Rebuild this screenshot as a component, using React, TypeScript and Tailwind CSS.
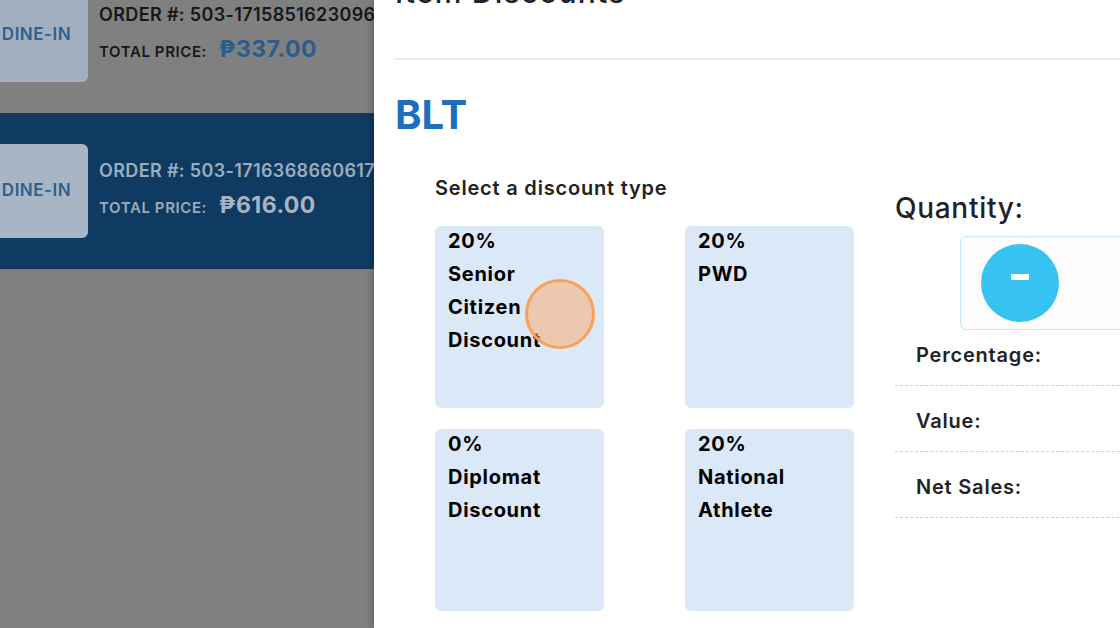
import React from "react";

const font = { fontFamily: "Inter, 'Noto Sans', sans-serif" };

function OrderRow({ order, price, active }: { order: string; price: string; active?: boolean }) {
  return (
    <div className={`h-[156px] flex items-center shrink-0 ${active ? "bg-[#0f3a62]" : "bg-[#808080]"}`}>
      <div className={`ml-[-15px] w-[103px] h-[94px] rounded-md flex items-center justify-center shrink-0 ${active ? "bg-[#a7b5c4]" : "bg-[#a1afbf]"}`}>
        <span className="text-[17px] tracking-[0.03em] font-semibold text-[#2f5f8f]">DINE-IN</span>
      </div>
      <div className="ml-[11px] flex flex-col whitespace-nowrap">
        <div className={`text-[18px] leading-[24px] tracking-[0.02em] font-semibold ${active ? "text-[#9cacbc]" : "text-[#171717]"}`}>ORDER #: {order}</div>
        <div className="flex items-baseline gap-[12px] mt-[5px]">
          <span className={`text-[15px] tracking-[0.04em] font-semibold ${active ? "text-[#9cacbc]" : "text-[#171717]"}`}>TOTAL PRICE:</span>
          <span className={`text-[23px] tracking-[0.02em] font-bold ${active ? "text-[#a6b5c5]" : "text-[#2c5c8c]"}`}>₱{price}</span>
        </div>
      </div>
    </div>
  );
}

function Card({ lines, children }: { lines: string[]; children?: React.ReactNode }) {
  return (
    <div className="relative h-[182px] rounded-md bg-[#dbe8f7] pl-[13px]">
      <div className="mt-[-1px]">
        {lines.map((l) => (
          <div key={l} className="text-[20px] leading-[33px] tracking-[0.035em] font-bold text-black">{l}</div>
        ))}
      </div>
      {children}
    </div>
  );
}

function InfoRow({ label, first }: { label: string; first?: boolean }) {
  return (
    <div className={`border-b border-dashed border-[#cfcfcf] pl-[21px] ${first ? "pt-[12px]" : "pt-[22px]"} pb-[17px]`}>
      <div className="text-[20px] leading-[26px] tracking-[0.04em] font-semibold text-[#1f2328]">{label}</div>
    </div>
  );
}

export default function App() {
  return (
    <div className="w-[1120px] h-[628px] flex overflow-hidden bg-white" style={font}>
      <div className="w-[374px] h-full bg-[#808080] flex flex-col shrink-0 overflow-hidden">
        <div className="mt-[-43px] flex flex-col">
          <OrderRow order="503-1715851623096" price="337.00" />
          <OrderRow order="503-1716368660617" price="616.00" active />
        </div>
      </div>
      <div className="flex-1 h-full bg-white shadow-[-3px_0_6px_rgba(0,0,0,0.18)] pl-[21px] flex flex-col overflow-hidden relative">
        <div className="h-[60px] shrink-0 border-b-2 border-[#e8e8e8]">
          <div className="mt-[-26px] text-[30px] leading-[36px] tracking-[0.04em] font-medium text-[#1f2328] whitespace-nowrap">Item Discounts</div>
        </div>
        <div className="mt-[35px] text-[40px] leading-[40px] font-bold text-[#1d6fbe]">BLT</div>
        <div className="flex">
          <div className="pl-[40px] w-[500px] shrink-0">
            <div className="mt-[40px] text-[20px] leading-[26px] tracking-[0.04em] font-semibold text-[#222]">Select a discount type</div>
            <div className="mt-[25px] grid grid-cols-[169px_169px] gap-x-[81px] gap-y-[21px]">
              <Card lines={["20%", "Senior", "Citizen", "Discount"]}>
                <div className="absolute left-[90px] top-[53px] w-[70px] h-[70px] rounded-full bg-[rgba(253,168,105,0.5)] border-[3px] border-[#f7a159]" />
              </Card>
              <Card lines={["20%", "PWD"]} />
              <Card lines={["0%", "Diplomat", "Discount"]} />
              <Card lines={["20%", "National", "Athlete"]} />
            </div>
          </div>
          <div className="w-[300px] shrink-0">
            <div className="mt-[56px] text-[28px] leading-[34px] tracking-[0.025em] font-medium text-[#1f2328]">Quantity:</div>
            <div className="mt-[11px] ml-[65px] w-[260px] h-[94px] rounded-md border-[1.5px] border-[#c3e7f3] bg-[#fcfcfc] flex items-center pl-[20px]">
              <div className="w-[78px] h-[78px] rounded-full bg-[#36c3f1] flex items-center justify-center">
                <div className="w-[18px] h-[6px] bg-white mt-[-12px]" />
              </div>
            </div>
            <InfoRow label="Percentage:" first />
            <InfoRow label="Value:" />
            <InfoRow label="Net Sales:" />
          </div>
        </div>
      </div>
    </div>
  );
}
